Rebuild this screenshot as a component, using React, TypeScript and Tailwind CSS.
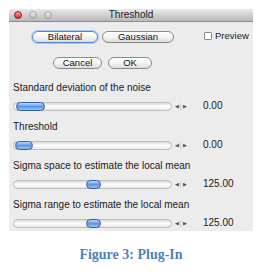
import React from "react";

const sans = { fontFamily: '"Liberation Sans", Arial, sans-serif' };

function PillButton({ label, width, focused }: { label: string; width: string; focused?: boolean }) {
  return (
    <div
      className={`${width} h-[12px] rounded-full flex items-center justify-center text-[9.5px] leading-none text-[#111] bg-gradient-to-b from-white via-[#f4f4f4] to-[#dcdcdc] border ${
        focused ? "border-[#4d86d4] shadow-[0_0_0_1px_#a9c8f0]" : "border-[#8a8a8a]"
      }`}
    >
      {label}
    </div>
  );
}

function Slider({ thumbLeft, thumbWidth, value }: { thumbLeft: number; thumbWidth: number; value: string }) {
  return (
    <div className="flex items-center h-[10px]">
      <div className="relative w-[159px] h-[9px] rounded-full border border-[#bdbdbd] bg-gradient-to-b from-[#dadada] via-white to-[#e8e8e8]">
        <div
          className="absolute top-[-1px] h-[9px] rounded-full border border-[#2f5fa8] bg-gradient-to-b from-[#c3dbf7] via-[#5d97e0] to-[#98c3f2]"
          style={{ left: thumbLeft, width: thumbWidth }}
        />
      </div>
      <div className="flex items-center ml-[2px] h-[9px] text-[5px] text-[#555] leading-none">
        <span className="w-[5px] flex justify-center">◀</span>
        <span className="w-px h-[7px] bg-[#d0d0d0] mx-[1px]" />
        <span className="w-[5px] flex justify-center">▶</span>
      </div>
      <span className="ml-[16px] text-[10px] text-[#1a1a1a] leading-none">{value}</span>
    </div>
  );
}

const rows = [
  { label: "Standard deviation of the noise", thumbLeft: 2, thumbWidth: 29, value: "0.00" },
  { label: "Threshold", thumbLeft: 1, thumbWidth: 18, value: "0.00" },
  { label: "Sigma space to estimate the local mean", thumbLeft: 72, thumbWidth: 15, value: "125.00" },
  { label: "Sigma range to estimate the local mean", thumbLeft: 72, thumbWidth: 15, value: "125.00" },
];

export default function App() {
  return (
    <div className="w-[263px] h-[276px] bg-white pt-[9px] pl-[9px]" style={sans}>
      <div className="w-[244px] h-[222px] bg-[#ececec] flex flex-col">
        {/* title bar */}
        <div className="relative h-[13px] bg-gradient-to-b from-[#e9e9e9] to-[#b9b9b9] border-b border-[#8c8c8c] flex items-center justify-center">
          <div className="absolute left-[5px] top-[2px] flex gap-[7px]">
            <span className="w-[8px] h-[8px] rounded-full bg-gradient-to-b from-[#f7a0a0] to-[#d21c1c] border border-[#9b1515]" />
            <span className="w-[8px] h-[8px] rounded-full bg-gradient-to-b from-[#ececec] to-[#bdbdbd] border border-[#a0a0a0]" />
            <span className="w-[8px] h-[8px] rounded-full bg-gradient-to-b from-[#ececec] to-[#bdbdbd] border border-[#a0a0a0]" />
          </div>
          <span className="text-[10px] leading-none text-[#222]">Threshold</span>
        </div>

        {/* top buttons */}
        <div className="flex items-center mt-[9px] pl-[23px]">
          <PillButton label="Bilateral" width="w-[66px]" focused />
          <div className="ml-[4px]">
            <PillButton label="Gaussian" width="w-[72px]" />
          </div>
          <div className="ml-[30px] -mt-[3px] flex items-center gap-[3px]">
            <span className="w-[8px] h-[8px] border border-[#8a8a8a] bg-white rounded-[1px]" />
            <span className="text-[9.5px] leading-none text-[#1a1a1a]">Preview</span>
          </div>
        </div>

        <div className="flex items-center mt-[14px] pl-[44px]">
          <PillButton label="Cancel" width="w-[49px]" />
          <div className="ml-[6px]">
            <PillButton label="OK" width="w-[44px]" />
          </div>
        </div>

        {/* sliders */}
        <div className="flex flex-col pl-[4px] mt-[13px] gap-[10px]">
          {rows.map((r) => (
            <div key={r.label} className="flex flex-col gap-[7px]">
              <span className="text-[10px] leading-[12px] text-[#1a1a1a]">{r.label}</span>
              <Slider thumbLeft={r.thumbLeft} thumbWidth={r.thumbWidth} value={r.value} />
            </div>
          ))}
        </div>
      </div>

      <div
        className="w-[244px] mt-[17px] text-center text-[14px] font-bold text-[#4f81bd] leading-none"
        style={{ fontFamily: '"Liberation Serif", "Times New Roman", serif' }}
      >
        Figure 3: Plug-In
      </div>
    </div>
  );
}
